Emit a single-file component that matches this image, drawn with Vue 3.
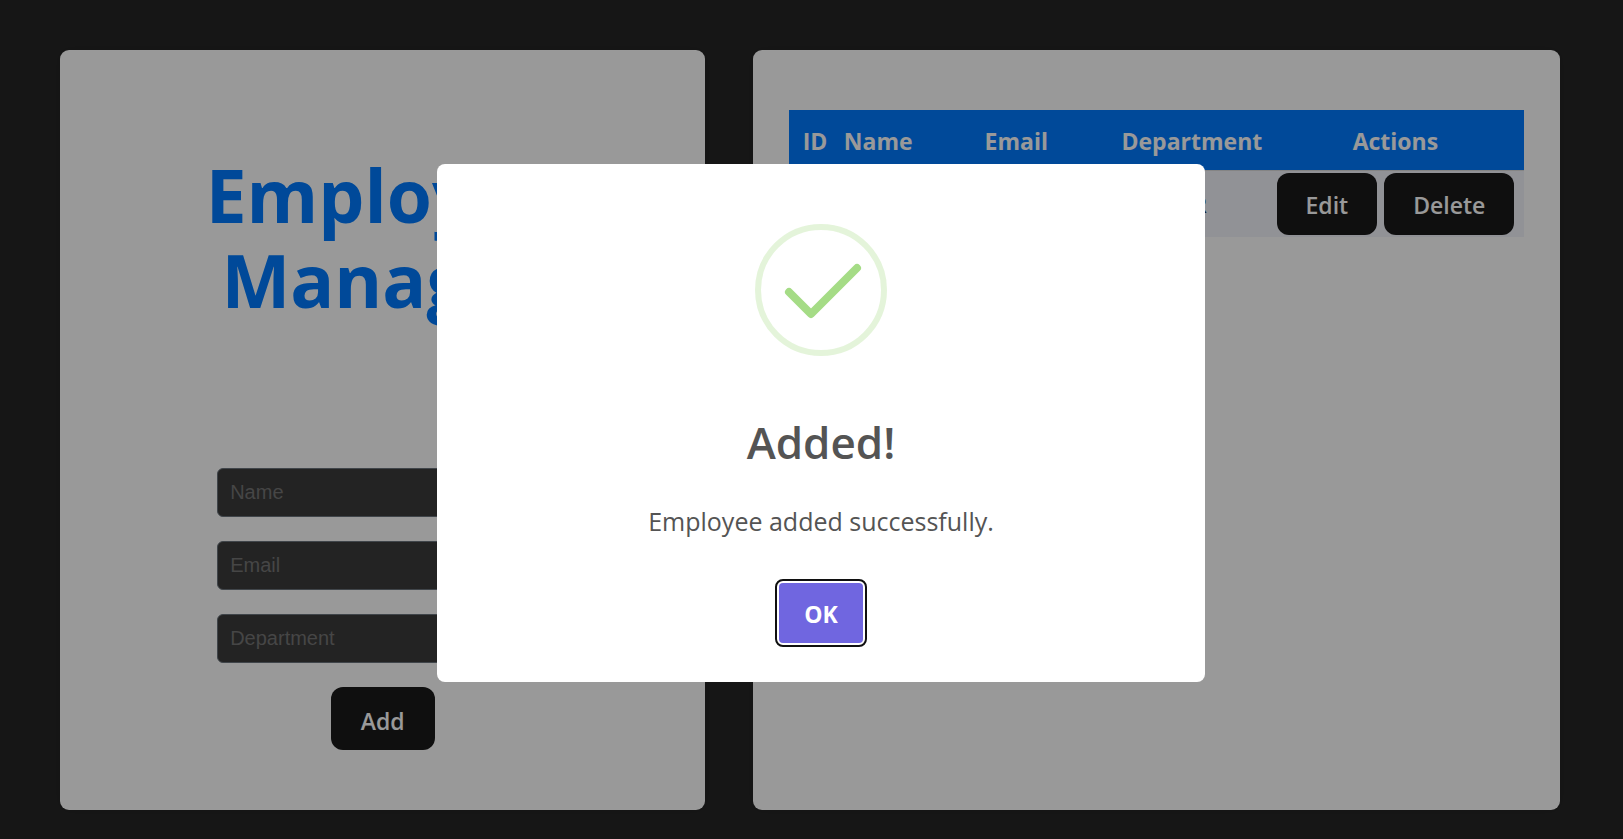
<script setup>
import { reactive, ref } from 'vue'

const fields = [
  { key: 'name', label: 'Name' },
  { key: 'email', label: 'Email' },
  { key: 'department', label: 'Department' }
]
const columns = ['ID', 'Name', 'Email', 'Department', 'Actions']
const form = reactive({ name: '', email: '', department: '' })
const employees = ref([{ id: 1, name: '', email: '', department: 'HR' }])
const dialogOpen = ref(true)

function addEmployee() {
  employees.value.push({ id: employees.value.length + 1, ...form })
  dialogOpen.value = true
}
function removeEmployee(id) {
  employees.value = employees.value.filter((e) => e.id !== id)
}
</script>

<template>
  <main class="page">
    <section class="card form-card">
      <h1 class="title">Employee<br />Manager</h1>
      <form class="form" @submit.prevent="addEmployee">
        <input
          v-for="f in fields"
          :key="f.key"
          v-model="form[f.key]"
          class="field"
          type="text"
          :placeholder="f.label"
          :aria-label="f.label"
        />
        <button class="btn btn-add" type="submit">Add</button>
      </form>
    </section>

    <section class="card table-card">
      <table class="table">
        <colgroup>
          <col class="col-id" />
          <col class="col-name" />
          <col class="col-email" />
          <col class="col-department" />
          <col class="col-actions" />
        </colgroup>
        <thead>
          <tr>
            <th v-for="c in columns" :key="c" scope="col">{{ c }}</th>
          </tr>
        </thead>
        <tbody>
          <tr v-for="e in employees" :key="e.id">
            <td>{{ e.id }}</td>
            <td>{{ e.name }}</td>
            <td>{{ e.email }}</td>
            <td>{{ e.department }}</td>
            <td>
              <div class="actions">
                <button class="btn" type="button">Edit</button>
                <button class="btn" type="button" @click="removeEmployee(e.id)">Delete</button>
              </div>
            </td>
          </tr>
        </tbody>
      </table>
    </section>

    <div v-if="dialogOpen" class="overlay">
      <div class="dialog" role="dialog" aria-modal="true" aria-labelledby="dialog-title">
        <svg class="check" viewBox="0 0 132 132" aria-hidden="true">
          <circle cx="66" cy="66" r="63" />
          <path d="M34 68 L56 90 L102 44" />
        </svg>
        <h2 id="dialog-title" class="dialog-title">Added!</h2>
        <p class="dialog-text">Employee added successfully.</p>
        <button class="ok" type="button" @click="dialogOpen = false">OK</button>
      </div>
    </div>
  </main>
</template>

<style>
body {
  margin: 0;
  background: #262626;
}
</style>

<style scoped>
.page {
  box-sizing: border-box;
  min-height: 100vh;
  display: grid;
  grid-template-columns: 4fr 5fr;
  gap: 48px;
  padding: 50px 63px 29px 60px;
  font-family: "Open Sans", "Noto Sans", sans-serif;
  font-size: 23px;
  line-height: 36px;
  color: #213547;
}
.card {
  box-sizing: border-box;
  min-width: 0;
  background: #fff;
  border-radius: 9px;
  box-shadow: 0 0 12px rgba(0, 0, 0, 0.1);
}
.form-card {
  display: flex;
  flex-direction: column;
  align-items: center;
  padding: 102px 36px 60px;
}
.title {
  margin: 0;
  font-size: 73px;
  line-height: 85px;
  font-weight: 700;
  text-align: center;
  color: #007bff;
}
.form {
  display: flex;
  flex-direction: column;
  align-items: center;
  gap: 24px;
  margin-top: 146px;
}
.field {
  box-sizing: border-box;
  width: 331px;
  height: 49px;
  padding: 0 12px;
  border: 1px solid #6b747c;
  border-radius: 6px;
  background: #3b3b3b;
  color: #fff;
  font-family: "Liberation Sans", Arial, sans-serif;
  font-size: 20px;
}
.field::placeholder {
  color: #757575;
  opacity: 1;
}
.btn {
  height: 62px;
  padding: 2px 29px 0;
  border: 0;
  border-radius: 12px;
  background: #1a1a1a;
  color: #fff;
  font-family: inherit;
  font-size: 23px;
  font-weight: 600;
}
.btn-add {
  height: 63px;
  padding: 4px 30px 0;
}
.table-card {
  padding: 60px 36px;
}
.table {
  width: 100%;
  table-layout: fixed;
  border-collapse: collapse;
  text-align: center;
}
.col-id { width: 7%; }
.col-name { width: 10.2%; }
.col-email { width: 27.4%; }
.col-department { width: 20.4%; }
.col-actions { width: 35%; }
th {
  height: 58px;
  padding: 2px 0 0;
  background: #007bff;
  color: #fff;
  font-weight: 700;
}
td {
  padding: 2px 0;
  background: #f2f3fb;
  border-top: 1px solid #ddd;
  font-size: 22px;
}
.actions {
  display: flex;
  justify-content: center;
  gap: 7px;
}
.overlay {
  position: fixed;
  inset: 0;
  display: flex;
  align-items: center;
  justify-content: center;
  padding: 7px 0 0 19px;
  background: rgba(0, 0, 0, 0.4);
}
.dialog {
  box-sizing: border-box;
  width: 768px;
  max-width: 100%;
  display: flex;
  flex-direction: column;
  align-items: center;
  padding: 60px 24px 39px;
  border-radius: 8px;
  background: #fff;
  color: #545454;
}
.check {
  width: 132px;
  height: 132px;
  fill: none;
  stroke: #a5dc86;
  stroke-linecap: round;
  stroke-linejoin: round;
}
.check circle {
  stroke-width: 6px;
  stroke-opacity: 0.3;
}
.check path {
  stroke-width: 8px;
}
.dialog-title {
  margin: 53px 0 0;
  font-size: 44px;
  line-height: 66px;
  font-weight: 600;
}
.dialog-text {
  margin: 26px 0 0;
  font-size: 25px;
  line-height: 40px;
}
.ok {
  height: 60px;
  margin-top: 42px;
  padding: 2px 25px 0;
  border: 0;
  border-radius: 4px;
  outline: 2px solid #101010;
  outline-offset: 2px;
  background: #7066e0;
  color: #fff;
  font-family: inherit;
  font-size: 23px;
  font-weight: 700;
}
</style>
